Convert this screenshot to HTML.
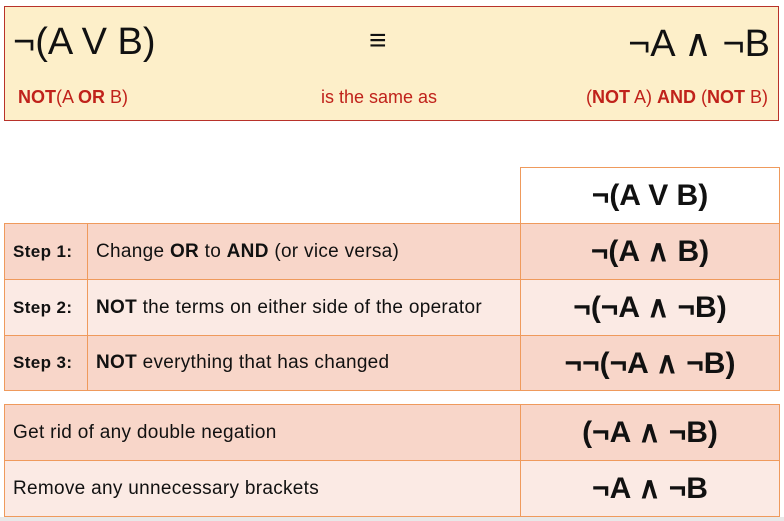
<!DOCTYPE html>
<html><head><meta charset="utf-8"><style>
body{margin:0;width:784px;height:521px;background:#fff;position:relative;overflow:hidden;font-family:"Liberation Sans",sans-serif}
.a{position:absolute;white-space:nowrap}
.top{position:absolute;left:4px;top:6px;width:773px;height:113px;background:#fdefc9;border:1px solid #b8322a}
.red{color:#c0221b;font-size:18px;letter-spacing:0}
.big{font-size:38px;color:#111;letter-spacing:0}
.c{position:absolute;box-sizing:border-box;border:1px solid #ef9a5c;display:flex;align-items:center}
.d{background:#f8d6c9}.l{background:#fbeae4}
.t{font-size:19px;color:#111;letter-spacing:0.3px;padding-left:8px}
.s{font-size:17px;letter-spacing:0.4px}
.f{font-size:30px;font-weight:bold;color:#111;justify-content:center;letter-spacing:0}
</style></head><body>
<div class="top"></div>
<div class="a big" style="left:13px;top:21px">¬(A V B)</div>
<div class="a big" style="left:369px;top:24px;font-size:30px">≡</div>
<div class="a big" style="right:14px;top:21px">¬A ∧ ¬B</div>
<div class="a red" style="left:18px;top:87px"><b>NOT</b>(A <b>OR</b> B)</div>
<div class="a red" style="left:321px;top:87px">is the same as</div>
<div class="a red" style="right:16px;top:87px">(<b>NOT</b> A) <b>AND</b> (<b>NOT</b> B)</div>

<div class="c f" style="left:520px;top:167px;width:260px;height:57px;background:#fff">¬(A V B)</div>

<div class="c d t s" style="left:4px;top:223px;width:84px;height:57px;font-weight:bold">Step 1:</div>
<div class="c d t" style="left:87px;top:223px;width:434px;height:57px">Change&nbsp;<b>OR</b>&nbsp;to&nbsp;<b>AND</b>&nbsp;(or vice versa)</div>
<div class="c d f" style="left:520px;top:223px;width:260px;height:57px">¬(A ∧ B)</div>

<div class="c l t s" style="left:4px;top:279px;width:84px;height:57px;font-weight:bold">Step 2:</div>
<div class="c l t" style="left:87px;top:279px;width:434px;height:57px"><b>NOT</b>&nbsp;the terms on either side of the operator</div>
<div class="c l f" style="left:520px;top:279px;width:260px;height:57px">¬(¬A ∧ ¬B)</div>

<div class="c d t s" style="left:4px;top:335px;width:84px;height:56px;font-weight:bold">Step 3:</div>
<div class="c d t" style="left:87px;top:335px;width:434px;height:56px"><b>NOT</b>&nbsp;everything that has changed</div>
<div class="c d f" style="left:520px;top:335px;width:260px;height:56px">¬¬(¬A ∧ ¬B)</div>

<div class="c d t" style="left:4px;top:404px;width:517px;height:57px">Get rid of any double negation</div>
<div class="c d f" style="left:520px;top:404px;width:260px;height:57px">(¬A ∧ ¬B)</div>
<div class="c l t" style="left:4px;top:460px;width:517px;height:57px">Remove any unnecessary brackets</div>
<div class="c l f" style="left:520px;top:460px;width:260px;height:57px">¬A ∧ ¬B</div>
<div class="a" style="left:0;top:517px;width:784px;height:4px;background:#e8e8e8"></div>
</body></html>
